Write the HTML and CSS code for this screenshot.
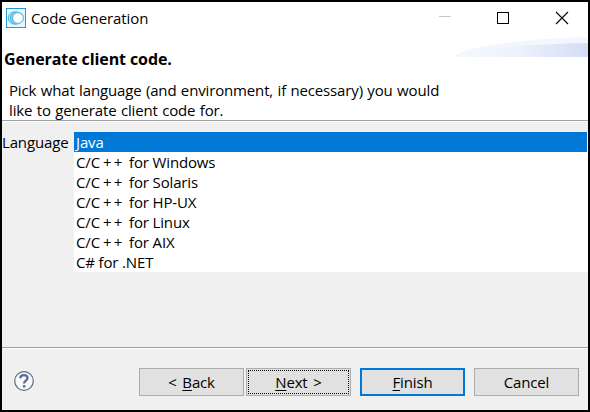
FILE: index.html
```html
<!DOCTYPE html>
<html lang="en">
<head>
<meta charset="utf-8">
<title>Code Generation</title>
<link rel="stylesheet" href="styles.css">
</head>
<body>
<div class="window">
  <header class="titlebar">
    <svg class="app-icon" width="20" height="20" viewBox="0 0 20 20" fill="none">
      <rect x=".5" y=".5" width="19" height="19" fill="#e9f7fd" stroke="#1b9fd3"/>
      <ellipse cx="8" cy="10" rx="5.8" ry="6" fill="#c4e6f4" stroke="#4ab3da"/>
      <ellipse cx="10" cy="10" rx="5.7" ry="6.2" fill="#8fd0ea" stroke="#4ab3da"/>
      <circle cx="12" cy="10" r="5.5" fill="#fff" stroke="#69c0e2" stroke-width="1.3"/>
    </svg>
    <span class="caption">Code Generation</span>
    <svg class="controls" width="130" height="14" viewBox="0 0 130 14" fill="none" shape-rendering="crispEdges">
      <path d="M0 5.5H12" stroke="#c8c8c8"/>
      <rect x="58.5" y="1.5" width="11" height="11" stroke="#000"/>
      <path d="M117 1L129 13M129 1L117 13" stroke="#000" stroke-width="1.1" shape-rendering="auto"/>
    </svg>
  </header>
  <section class="banner">
    <svg class="swoosh" width="136" height="20" viewBox="0 0 136 20">
      <defs><linearGradient id="sky"><stop offset="0" stop-color="#f7f9fe"/><stop offset=".5" stop-color="#edf1fc"/><stop offset="1" stop-color="#d4ddf6"/></linearGradient></defs>
      <path d="M0 20C20 7 75 2 136 0V20Z" fill="#f3f6fd"/>
      <path d="M0 20C30 11 80 7 136 6V20Z" fill="url(#sky)"/>
    </svg>
    <h1 class="heading">Generate client code.</h1>
    <p class="desc">Pick what language (and environment, if necessary) you would<br>like to generate client code for.</p>
  </section>
  <main class="content">
    <label class="label">Language</label>
    <ul class="list">
      <li class="selected">Java</li>
      <li>C/C<span class="plus">++</span> for Windows</li>
      <li>C/C<span class="plus">++</span> for Solaris</li>
      <li>C/C<span class="plus">++</span> for HP-UX</li>
      <li>C/C<span class="plus">++</span> for Linux</li>
      <li>C/C<span class="plus">++</span> for AIX</li>
      <li>C# for .NET</li>
    </ul>
  </main>
  <footer class="footer">
    <svg class="help" width="20" height="20" viewBox="0 0 20 20" fill="none" stroke="#5b6c8f">
      <circle cx="10" cy="10" r="9.3" fill="#f8f9fb" stroke-width="1.2"/>
      <path d="M6.3 7.2C6.4 2.9 13.5 3.1 13.5 7C13.5 9.7 10.1 9.5 10.1 12.5" stroke-width="2.3"/>
      <path d="M8.9 15.3H11.4" stroke-width="2.4"/>
    </svg>
    <button class="btn back">&lt; <u>B</u>ack</button>
    <button class="btn next"><u>N</u>ext &gt;</button>
    <button class="btn finish"><u>F</u>inish</button>
    <button class="btn cancel">Cancel</button>
  </footer>
</div>
</body>
</html>
```
FILE: styles.css
```css
* { box-sizing: border-box; }
body {
  margin: 0;
  font: 15px/20px "Open Sans", "Noto Sans", sans-serif;
  letter-spacing: -.15px;
  color: #000;
}
.window {
  width: 590px;
  height: 412px;
  border: 2px solid #000;
  background: #f0f0f0;
  display: flex;
  flex-direction: column;
  white-space: nowrap;
}
.titlebar {
  height: 35px;
  display: flex;
  align-items: flex-start;
  padding: 6px 19px 0 4px;
  background: #fff;
}
.caption { margin: 0 0 0 5px; letter-spacing: -.1px; }
.controls { margin: 3px 0 0 auto; }
.banner {
  position: relative;
  height: 85px;
  background: #fff;
  border-bottom: 1px solid #fff;
  box-shadow: inset 0 -1px #a0a0a0;
}
.swoosh { position: absolute; right: 0; top: 0; }
.heading {
  margin: 0;
  padding: 12px 0 0 2px;
  font-size: 16px;
  line-height: 20px;
  font-weight: 700;
  letter-spacing: -.1px;
}
.desc { margin: 0; padding: 11px 0 0 7px; word-spacing: .7px; }
.content { display: flex; padding-top: 10px; }
.label { width: 72px; line-height: 20px; }
.list {
  flex: 1;
  margin: 0;
  padding: 0;
  list-style: none;
  background: #fff;
}
.list li { height: 20px; line-height: 20px; padding-left: 2px; }
.list .selected { background: #0078d7; color: #fff; margin-right: 1px; }
.plus { margin-left: 3px; letter-spacing: 2.1px; margin-right: 1px; }
.footer {
  margin-top: auto;
  height: 63px;
  border-top: 1px solid #a0a0a0;
  box-shadow: inset 0 1px #fff;
  display: flex;
  align-items: flex-start;
  padding: 20px 9px 0 12px;
}
.help { margin: 3px 105px 0 0; }
.btn {
  width: 105px;
  height: 28px;
  padding: 0;
  border: 1px solid #adadad;
  background: #e1e1e1;
  font: inherit;
  letter-spacing: inherit;
  color: inherit;
}
.btn u { text-underline-offset: 2px; text-decoration-thickness: 1px; }
.back, .next { word-spacing: 2px; }
.next { margin-left: 2px; outline: 1px dotted #000; outline-offset: -3px; }
.finish { margin-left: 9px; border: 2px solid #0078d7; }
.cancel { margin-left: 9px; }
```
